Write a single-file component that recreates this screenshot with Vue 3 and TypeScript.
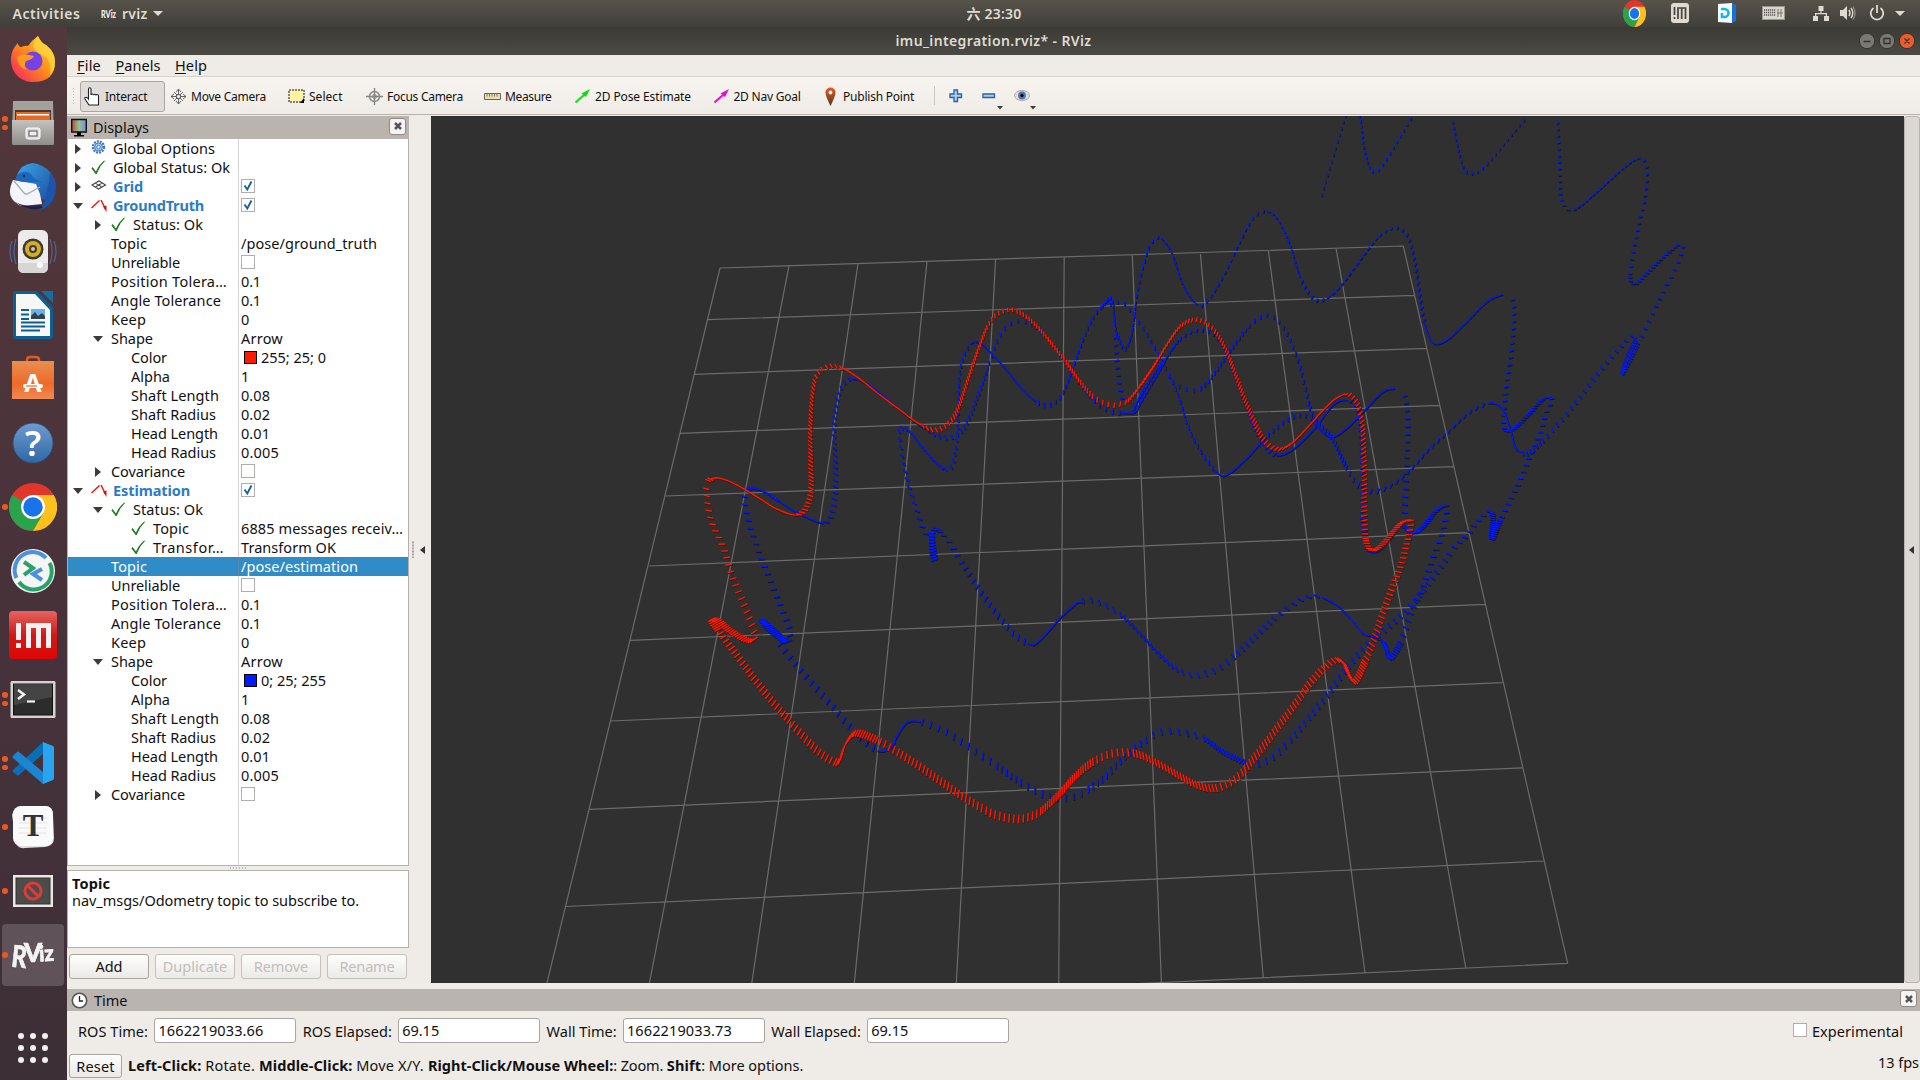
<script setup lang="ts">
import { h } from 'vue'

const FAMILY = '"Noto Sans", "Noto Sans CJK SC", sans-serif'
const pen = document.createElement('canvas').getContext('2d')!

interface TxProps { t: string; w: number; s?: number; b?: number; u?: boolean }

// Label with a fixed advance width: tracking is derived from the measured text.
const Tx = (p: TxProps) => {
  const size = p.s ?? 14.5
  const weight = p.b ?? 400
  pen.font = `${weight} ${size}px ${FAMILY}`
  const gap = (p.w - pen.measureText(p.t).width) / p.t.length
  const style = { fontSize: `${size}px`, fontWeight: weight, letterSpacing: `${gap.toFixed(3)}px`, width: `${p.w}px`, display: 'inline-block', whiteSpace: 'pre', flex: 'none' }
  return h('span', { style }, p.u ? [h('u', { style: { textUnderlineOffset: '2px' } }, p.t[0]), p.t.slice(1)] : p.t)
}
Tx.props = ['t', 'w', 's', 'b', 'u']

interface Row { d: number; t: string; w: number; arrow?: 'open' | 'shut'; icon?: string; b?: number; v?: string; vw?: number; check?: number; color?: string; sel?: boolean }

const shapeRows = (color: string, label: string): Row[] => [
  { d: 1, t: 'Unreliable', w: 69, check: 0 },
  { d: 1, t: 'Position Tolera…', w: 116, v: '0.1', vw: 20 },
  { d: 1, t: 'Angle Tolerance', w: 110, v: '0.1', vw: 20 },
  { d: 1, t: 'Keep', w: 35, v: '0', vw: 9 },
  { d: 1, t: 'Shape', w: 42, arrow: 'open', v: 'Arrow', vw: 42 },
  { d: 2, t: 'Color', w: 36, color, v: label, vw: 65 },
  { d: 2, t: 'Alpha', w: 39, v: '1', vw: 9 },
  { d: 2, t: 'Shaft Length', w: 88, v: '0.08', vw: 29 },
  { d: 2, t: 'Shaft Radius', w: 85, v: '0.02', vw: 29 },
  { d: 2, t: 'Head Length', w: 87, v: '0.01', vw: 29 },
  { d: 2, t: 'Head Radius', w: 85, v: '0.005', vw: 38 },
  { d: 1, t: 'Covariance', w: 74, arrow: 'shut', check: 0 },
]
const rows: Row[] = [
  { d: 0, t: 'Global Options', w: 102, arrow: 'shut', icon: 'gear' },
  { d: 0, t: 'Global Status: Ok', w: 117, arrow: 'shut', icon: 'ok' },
  { d: 0, t: 'Grid', w: 30, arrow: 'shut', icon: 'grid', b: 700, check: 1 },
  { d: 0, t: 'GroundTruth', w: 91, arrow: 'open', icon: 'odom', b: 700, check: 1 },
  { d: 1, t: 'Status: Ok', w: 70, arrow: 'shut', icon: 'ok' },
  { d: 1, t: 'Topic', w: 36, v: '/pose/ground_truth', vw: 136 },
  ...shapeRows('#ff1900', '255; 25; 0'),
  { d: 0, t: 'Estimation', w: 77, arrow: 'open', icon: 'odom', b: 700, check: 1 },
  { d: 1, t: 'Status: Ok', w: 70, arrow: 'open', icon: 'ok' },
  { d: 2, t: 'Topic', w: 36, icon: 'ok', v: '6885 messages receiv…', vw: 162 },
  { d: 2, t: 'Transfor…', w: 71, icon: 'ok', v: 'Transform OK', vw: 95 },
  { d: 1, t: 'Topic', w: 36, v: '/pose/estimation', vw: 117, sel: true },
  ...shapeRows('#0019ff', '0; 25; 255'),
]

const dock: { id: string; dots: number }[] = [
  { id: 'firefox', dots: 0 }, { id: 'files', dots: 2 }, { id: 'mail', dots: 0 }, { id: 'speaker', dots: 0 },
  { id: 'writer', dots: 0 }, { id: 'store', dots: 0 }, { id: 'help', dots: 0 }, { id: 'chrome', dots: 1 },
  { id: 'remote', dots: 0 }, { id: 'meet', dots: 0 }, { id: 'term', dots: 2 }, { id: 'code', dots: 2 },
  { id: 'typora', dots: 1 }, { id: 'blocked', dots: 1 }, { id: 'rviz', dots: 1 },
]

const fields = [
  { l: 'ROS Time:', lw: 70, v: '1662219033.66', vw: 105 },
  { l: 'ROS Elapsed:', lw: 89, v: '69.15', vw: 37 },
  { l: 'Wall Time:', lw: 70, v: '1662219033.73', vw: 105 },
  { l: 'Wall Elapsed:', lw: 89.5, v: '69.15', vw: 37 },
]

// ---- ground grid: ends of every line in window coordinates ----
const leftEnd = [[720, 268], [707.5, 319.7], [694, 374.3], [680, 433.3], [665, 496], [649, 566], [630.5, 640.4], [611, 721], [589.5, 809.4], [565.7, 906.5], [539, 1012]]
const rightEnd = [[1403.3, 246], [1415, 295.3], [1427, 348.3], [1440, 405.3], [1453.5, 466.7], [1469, 532.7], [1485, 604.3], [1502.7, 682.7], [1522, 767.8], [1544, 861], [1567.7, 963.3]]
const topX = [720, 789, 858, 927, 995.6, 1064.2, 1132.3, 1200.3, 1268.3, 1336, 1403.3]
const botEnd = [[547, 983], [649.4, 983], [751.8, 983], [854.3, 983], [956.3, 983], [1058.7, 983], [1161.4, 983], [1263.3, 978], [1365, 973], [1465.8, 968], [1567.7, 963.3]]
const gridPath = [
  ...leftEnd.map((p, i) => `M${p}L${rightEnd[i]}`),
  ...topX.map((x, i) => `M${x},${(268 - i * 2.2).toFixed(1)}L${botEnd[i]}`),
].join('')

// ---- odometry tracks: "x,y" way-points ----
// "@n" sets the arrow spacing; "~n" does too, for stretches driven along the heading
interface Track { c: [number, number]; k: number; p: string }
const truth: Track = {
  c: [1060, 540], k: 2.2,
  p: `@2.6 706,482 711,479 ~3.6 720,478.3 735,484 756.7,496.7 776.7,509 796.7,515 @3.6 806.7,506.7 811,490 810.7,463 810.3,430 811.7,400 815,380 @4.8 820,370.7 830,366 841.7,368 ~4 856.7,376.7 880,395 900,410 920,424.3 @4.6 936.7,430 951.7,420 @3.4 960,403.3 970,373.3 980,345 988.3,325 @4.6 996.7,314.7 1008.3,310 1020,312.7 @3.4 1035,324.3 1050,341.7 1065,360.7 1080,381.7 1095,398.3 @6 1110,405 1118,404.5 1126.7,401.7 @3.4 1138.3,388.3 1153.3,366.7 1166.7,345 1180,326.7 1193.3,320 @4.4 1205,322.3 1216.7,333.3 @3.4 1226.7,351.7 1235,373.3 1245,400 1255,423.3 1265,441.7 @4 1278.3,449 1291.7,443.3 ~3.5 1306.7,428.3 1323.3,410 1336.7,398 1348.3,394.3 @4.2 1356.7,402.3 1361.7,420 1363.3,440 1364.3,476.7 1364.3,516.7 1366,540 @2.6 1371.7,550.3 1381.7,545 1393.3,531.7 1401.7,522.7 1410.7,521 @4.6 1408.3,536.7 1401.7,563 1393.3,585 1383.3,611.7 1375,636.7 1365,661.7 @2.5 1355,681.7 1348.3,673.3 1344,663.3 1336.7,660 @4 1326.7,665.7 1310,683.3 1293.3,706.7 1273.3,733.3 1256.7,755 1240,775 @5 1226.7,784.3 1213.3,788.3 @3.3 1196.7,785 1176.7,774.3 1153.3,761 1133.3,753.3 @5.2 1113.3,753.3 1093.3,761.7 @2.8 1076.7,775 1056.7,796.7 1040,811.7 @4.6 1029,817 1015,819 993,814 966.7,799 @4.2 943,783 920,766.7 896.7,751.7 @5 876.7,740 @2.4 856.7,733 848,740 843,750 840,760 835,762 @4.4 820,753 793,725 763,690 736.7,655 716.7,628 @2.2 711,620 718,620.7 730,630.7 746.7,640 755,638 @7 751,623 745,606.7 733,578 723,546.7 713,525 708,506.7 706,484`,
}
const estimate: Track[] = [
  { c: [1060, 540], k: 2.2, p: `@2.6 745,491.7 751.7,488 763,491 780,501.7 ~4.5 800,514 823,522.7 @6 831.7,513 835,493 835,460 834,430 836,405 841.7,386.7 850,379 ~4.8 863,381.7 880,393 900,410 926.7,430 @6 943,437 958,434 @5 968,420 980,390 990,360 @7.5 1000,335 1013,322 1027,322 @6 1041.7,331.7 1063,358 1080,383 1097,403 @7 1113,412 1123,412.7 ~3.2 1135,411.7 1141.7,400 @4.2 1156.7,375 1170,351.7 1183,336.7 @6 1198,330 1213,333 1225,350 1236.7,380 1251.7,420 @5 1265,445 1276.7,455 ~4.2 1293,449 1313,430 1333,405 1346.7,400 @6 1356.7,406.7 1360.7,433 1362.7,476.7 1363,520 @3 1368,548 1376.7,550.7 1390,536.7 1400,525 @2.6 1413,532.7 1423,526.7 1436.7,510 1446.7,506 @7.5 1445,520 1440,540 1433,556.7 1426.7,575 1421.7,590 1413,606.7 1408,620 1400,643 @2.4 1390,658 1386.7,650 1383,641.7 1375,637 ~4.2 1363,633 1350,618 1336.7,605 @5 1320,596.7 @8 1306.7,597 1290,606 1270,621.7 @6 1253,638 1233,656.7 @8 1216.7,669 1196.7,675 1176.7,669 @5.4 1156.7,651.7 1136.7,630 1116.7,611.7 @8 1093,600 1080,602 ~4.2 1076.7,603 1060,618 1040,640 1030,644 @7 1013,633 990,605 973,580 960,560 @8 950,543 940,531.7 @2.8 935,528 931.7,536.7 935,560 932,552 931,532 @8 925,533 916.7,510 908,483 903,460 899,434 901.7,428 @4.2 910,431.7 923,448 936.7,463 946.7,469 @6.5 953,461.7 957,436.7 958,413 959,380 963.3,356.7 971.7,343 ~4.6 981.7,344 993,355 1006.7,370 1023,390 1036.7,401.7 @6 1048,405 1061.7,395 1073,366.7 1080,346.7 1091.7,320 1101.7,306.7 @2.6 1111.7,299 @4.4 1115,326.7 1120,341.7 @5 1125,349 1131.7,333 1136,300 @7 1141.7,271.7 1150,245 1160,237.7 ~5 1171.7,253 1183,285 1196.7,304 @6.5 1206.7,301.7 1223,276.7 1240,241.7 1253,218 1266.7,211 ~5 1278,220 1290,245 1300,276.7 @6 1311.7,296.7 1323,300 ~6 1340,286.7 1360,260 1380,235 @6 1396.7,228 1408,236.7 1415,263 1420,296.7 1425,325 ~4.6 1433,342.7 1446.7,340 1466.7,321.7 1486.7,301.7 1503,294` },
  { c: [1150, 440], k: 1, p: `@7 1508,295 1513,300 1514,320 1511,355 1506.7,383 1504,410 1504,428 @3 1511.7,430 1528,415 1543,399 1551.7,399 @7 1546,413 1541,430 1535,445 1528,460 1520,480 1510,500 1500,520 @2 1491.7,539 1492.7,515 1488,512 @7 1476.7,521.7 1466.7,535 1453,548` },
  { c: [1100, 420], k: 1.6, p: `@7 1453,548 1436.7,571.7 1423,590 1406.7,610 1386.7,628 1366.7,645 1353,660 1340,676.7 1326.7,695 1306.7,720 1290,740 @8 1273,756.7 1256.7,764` },
  { c: [1060, 540], k: 2.2, p: `@3.2 1248,764 1223,751.7 1203,738 @8.5 1180,731.7 1160,731.7 1143,741.7 @6.5 1123,758 1106.7,775 @5.5 1086.7,790 @8 1068,797.7 1050,796.7 1040,793 1020,781.7 @5.6 993,763 @8.5 966.7,745 943,730 920,721.7 ~3.4 906.7,723 896.7,736.7 891.7,746.7 880,751 @8 866.7,742.7 850,726.7 826.7,700 803,673 786.7,653 776.7,640` },
  { c: [900, 560], k: 0.6, p: `@2.2 791,640 784,641 776.7,633 764,622 762,620 770,630 785,640 @8 790,633 785,616.7 775,593 766.7,571.7 763,563 758,550 750,526.7 745,506.7 744,493` },
  { c: [1200, 560], k: 2.6, p: `@7.5 1103,306.7 1120,301.7 1128,308 1143,328 1153,345 1163,363 1173,381.7 1190,390 1203,386.7 @5 1216.7,370 1233,346.7 1250,325 @7 1263,316 1273,316.7 1285,330 1296.7,356.7 1305,386.7 1310,408 @5 1318,426.7 ~4.6 1331.7,436.7 1346.7,428 1366.7,408 1383,391.7 1396.7,388` },
  { c: [1160, 450], k: 1, p: `@7.5 1400,390 1405,396.7 1407.7,420 1407,453 1405.7,483 1404,516.7` },
  { c: [1260, 640], k: 2, p: `@6.5 1166.7,370 1178,395 1188,426.7 1200,450 1216.7,472 ~4.6 1228,474 1246.7,458 1266.7,436.7 @6 1286.7,420 1303,415 1316.7,421.7 @4 1333,440 1346.7,468 @7 1360,486.7 1376.7,491 1396.7,481.7 1413,466.7 1430,448 1450,430 1470,411.7 1490,403 ~3.2 1501.7,408 1508,422 1512,436 1515,446.7 1520,451.7` },
  { c: [1040, 380], k: 1, p: `@7.5 1115,330 1116.7,360 1119,383 1123,401.7` },
  { c: [1060, 540], k: 2.6, p: `@4 1131.7,415 1138,400 1150,380 1158,368 1164,362` },
  { c: [1380, 320], k: 3, p: `@6.5 1319.6,201.7 1331,163 1345,116.7 1352,90 1360,117 @5 1363.7,146.7 1370,168 1376.7,171.7 @6.5 1386,160 1398,140 1412,117` },
  { c: [1460, 320], k: 3, p: `@5.4 1452,117 1457.6,146.7 1464.5,170 @6 1474,173 1486,165 1504.5,143 1527,117` },
  { c: [1400, 200], k: 1, p: `@6 1557.6,117 1559.6,166.7 1561.6,200 1570.6,211.7` },
  { c: [1500, 250], k: 1, p: `~4.6 1570.6,211.7 1584,203 1606.5,183 1627,165 1641,158 @7 1647,170 1645,196.7 1639,223 1633,253 1630,276.7 @3.6 1635,284 1647,273 1663.7,256.7 1678,245 @8 1683,246 1676,266.7 1663.7,290 1656.7,305 1645,328 1636.7,345 @2.6 1631,357 1621.7,374 1628,355 1635,340 1631,335.7` },
  { c: [1460, 240], k: 1, p: `@7 1631,335.7 1621.7,345 1603,366.7 1583,392.7 1563,418 1543,440 @4 1528,453 1520,451.7` },
]

function ticks(track: Track, boost: number): string {
  const pts: [number, number, number, boolean][] = []
  let gap = 5
  let along = false
  for (const tok of track.p.trim().split(/\s+/)) {
    if (tok[0] === '@' || tok[0] === '~') {
      gap = +tok.slice(1)
      along = tok[0] === '~'
    } else {
      const [x, y] = tok.split(',').map(Number)
      pts.push([x, y, gap, along])
    }
  }
  let out = ''
  let acc = 0
  let lx = pts[0][0]
  let ly = pts[0][1]
  for (let i = 0; i < pts.length - 1; i++) {
    const a = pts[Math.max(0, i - 1)]
    const b = pts[i]
    const c = pts[i + 1]
    const d = pts[Math.min(pts.length - 1, i + 2)]
    for (let n = 1; n <= 60; n++) {
      const t = n / 60
      const f = (j: 0 | 1) => 0.5 * (2 * b[j] + (c[j] - a[j]) * t + (2 * a[j] - 5 * b[j] + 4 * c[j] - d[j]) * t * t + (3 * b[j] - a[j] - 3 * c[j] + d[j]) * t * t * t)
      const x = f(0)
      const y = f(1)
      const sx = x - lx
      const sy = y - ly
      acc += Math.hypot(sx, sy)
      lx = x
      ly = y
      if (acc < c[2]) continue
      acc = 0
      const nx = c[3] ? sx : x - track.c[0]
      const ny = c[3] ? sy : (y - track.c[1]) * track.k
      const m = Math.hypot(nx, ny) || 1
      const len = (1.3 + ((y - 100) / 720) * 2.3) * boost
      const ux = (nx / m) * len
      const uy = (ny / m) * len
      out += `M${(x - ux).toFixed(1)} ${(y - uy).toFixed(1)}L${(x + ux).toFixed(1)} ${(y + uy).toFixed(1)}`
    }
  }
  return out
}
const bluePath = estimate.map((t) => ticks(t, 1.08)).join('')
const redPath = ticks(truth, 1.2)
</script>

<template>
  <div class="screen">
    <header class="topbar">
      <Tx class="act" t="Activities" :w="68" :s="14" :b="600" />
      <svg class="rvmini" width="18" height="20"><text x="1" y="14" font-size="10.500" font-weight="900" textLength="15" lengthAdjust="spacingAndGlyphs" fill="#eee" class="logo">RViz</text></svg>
      <Tx class="app" t="rviz" :w="25.5" :s="14" :b="600" />
      <i class="tri"></i>
      <div class="clock"><Tx t="六 23:30" :w="55" :s="14" :b="600" /></div>
      <div class="tray">
        <svg width="23" height="27" viewBox="0 0 48 48" preserveAspectRatio="none"><use href="#chrome-logo" /></svg>
        <svg width="18" height="20" viewBox="0 0 18 20"><rect width="18" height="20" rx="3" fill="#dfdbd2" /><path d="M3.5 4v8M3.5 14v2M7 16V5h7.500v11M10.700 5v11" stroke="#45433e" stroke-width="1.700" fill="none" /></svg>
        <svg width="20" height="20" viewBox="0 0 20 20"><path d="M1 1l14-1v20L1 19z" fill="#f7fbff" /><path d="M15 0l4 2v16l-4 2z" fill="#1573d8" /><path d="M4 6h3.500a4 4 0 0 1 0 8H5v-4" fill="none" stroke="#16b7e8" stroke-width="2.600" /></svg>
        <svg width="23" height="14" viewBox="0 0 23 14"><rect x=".5" y=".5" width="22" height="13" fill="#d9d6ce" stroke="#9a978f" /><path d="M2 4h12M2 6.500h12M2 9h12" stroke="#55534d" stroke-width="1.500" stroke-dasharray="1.200 .8" /><path d="M16 3v8M19 3v8M15 7h6" stroke="#77756e" /></svg>
        <svg width="16" height="16" viewBox="0 0 16 16"><path d="M5.500 1h5v5h-5zM0 11h5v5H0zM11 11h5v5h-5zM2 8h12v1.200H2zM7.400 6h1.200v3H7.400zM2 8h1.200v3H2zM12.800 8H14v3h-1.200z" fill="#dfdbd2" /></svg>
        <svg width="17" height="16" viewBox="0 0 17 16"><path d="M0 5h3l4-4v14l-4-4H0z" fill="#dfdbd2" /><path d="M9 5q2 3 0 6M11 3q3.500 5 0 10" fill="none" stroke="#dfdbd2" stroke-width="1.400" /><path d="M13 1.500q4 6.500 0 13" fill="none" stroke="#8b8881" stroke-width="1.400" /></svg>
        <svg width="16" height="16" viewBox="0 0 16 16"><path d="M4.500 3A6.300 6.300 0 1 0 11.500 3M8 0v8" fill="none" stroke="#dfdbd2" stroke-width="1.800" /></svg>
        <i class="tri"></i>
      </div>
    </header>

    <div class="below">
      <nav class="dock">
        <div v-for="k in dock" :key="k.id" class="cell" :class="{ on: k.id === 'rviz' }">
          <span class="dots"><i v-for="n in k.dots" :key="n"></i></span>
          <svg width="48" height="48" viewBox="0 0 48 48">
            <template v-if="k.id === 'firefox'">
              <path d="M24 47C11 47 2 37 2 25 2 17 5 12 9 8q0 3 3 4 5-2 7-1Q23 5 29 1q3 7 8 9 9 7 9 17 0 20-22 20z" fill="url(#ffx)" />
              <path d="M29 1q3 7 8 9 9 7 9 17 0 8-5 13Q43 28 37 22 28 18 24 12 25 5 29 1z" fill="#ffd43c" opacity=".8" />
              <circle cx="24" cy="26" r="9.500" fill="#7542e5" /><path d="M8 22q5-4 12-2l5 1q-2 4-8 5-3 5 1 9-9-2-10-13z" fill="#ff9a1f" />
            </template>
            <template v-else-if="k.id === 'files'">
              <path d="M4 2h40l1 42q0 2-2 2H5q-2 0-2-2z" fill="#a3a19d" /><path d="M6 11h36v12H6z" fill="#4b3a32" /><path d="M7 13h34v9H7z" fill="#e8681f" /><path d="M8 15h32v1.500H8z" fill="#fff" />
              <path d="M3 21h42v23q0 2-2 2H5q-2 0-2-2z" fill="url(#metal)" /><rect x="17" y="29" width="14" height="11" rx="2" fill="#ddd" stroke="#fff" /><rect x="20" y="32" width="8" height="5" fill="#eee" stroke="#555" />
            </template>
            <template v-else-if="k.id === 'mail'">
              <path d="M8 12Q12 1 24 0q11 2 17 9 8 9 5 22-3 13-16 16 5-5 6-10L8 28z" fill="url(#tb)" />
              <path d="M41 9q7 9 5 22-3 13-16 16 8-8 8-20 3-9 3-18z" fill="#1c55ad" />
              <path d="M4 17Q-3 32 6 39q3 3 7 4l20-2-2-10-4-10-11-2z" fill="#f3f5f9" />
              <path d="M5 18l10 12q1.500 1.500 3.500.8L31 24" fill="none" stroke="#a4adbd" stroke-width="1.300" />
              <path d="M8 12q8-6 14-1 3 6 13 9l-11-1Q14 20 6 17z" fill="#1f66bd" /><circle cx="15" cy="13" r="1.200" fill="#0c2347" />
              <path d="M6 39q12 6 25 3l3 3q-14 4-28-6z" fill="#232047" />
            </template>
            <template v-else-if="k.id === 'speaker'">
              <path d="M3 14q-4 10 0 21M7 12q-4 12 0 25M45 14q4 10 0 21M41 12q4 12 0 25" fill="none" stroke="#536491" stroke-width="1.200" /><rect x="9" y="3" width="30" height="43" rx="6" fill="#ecebea" /><path d="M9 36h30v4q0 6-6 6H15q-6 0-6-6z" fill="#d8d6d4" /><circle cx="24" cy="22" r="10.500" fill="#3b3935" /><circle cx="24" cy="22" r="8" fill="#d8ad1d" /><circle cx="24" cy="22" r="4" fill="#3c3a35" /><circle cx="24" cy="22" r="2" fill="#c9c5bc" /><circle cx="31" cy="38" r="3" fill="#fafafa" />
            </template>
            <template v-else-if="k.id === 'writer'">
              <path d="M6 0h22l16 16v29q0 3-3 3H7q-3 0-3-3V2q0-2 2-2z" fill="#0b5f92" /><path d="M7 3h19l15 16v26H7z" fill="#f7f7f5" /><path d="M32 0h12v12z" fill="#176ea6" /><path d="M12 19h8M12 23.500h8M12 28h8M12 31.500h24M12 35.500h24M12 39.500h19" stroke="#0b5f92" stroke-width="2" /><path d="M22 18h14v10H22z" fill="#67b4e8" /><path d="M22 28v-3l4-4 3 4 4-3 3 3v3z" fill="#33424b" />
            </template>
            <template v-else-if="k.id === 'store'">
              <path d="M18 10V5q0-3 3-3h6q3 0 3 3v5" fill="none" stroke="#e55a21" stroke-width="2.500" /><path d="M3 6h42v38H3z" fill="url(#bag)" /><text x="24" y="37" font-size="25" font-weight="700" text-anchor="middle" fill="#fff">A</text><path d="M16 31h16" stroke="#fff" stroke-width="4" stroke-linecap="round" /><path d="M17 31h11" stroke="#ed6b2c" stroke-width="1.200" />
            </template>
            <template v-else-if="k.id === 'help'">
              <circle cx="24" cy="24" r="20" fill="url(#hlp)" stroke="#2c4f78" stroke-width=".8" /><text x="24" y="36.500" font-size="35" font-weight="600" text-anchor="middle" fill="#fff">?</text>
            </template>
            <g v-else-if="k.id === 'chrome'" id="chrome-logo">
              <circle cx="24" cy="24" r="24" fill="#e0362c" /><path d="M24 24L3.200 12A24 24 0 0 0 24 48l10.400-18z" fill="#2ba24c" /><path d="M24 12h20.800A24 24 0 0 1 24 48l10.400-18z" fill="#fcc21b" /><circle cx="24" cy="24" r="12" fill="#fff" /><circle cx="24" cy="24" r="9.700" fill="#1a73e8" />
            </g>
            <template v-else-if="k.id === 'remote'">
              <circle cx="24" cy="24" r="22" fill="#f5f5f3" /><path d="M7.500 31A18 18 0 0 1 37 11" fill="none" stroke="#4b91e0" stroke-width="4" /><path d="M40.500 16A18 18 0 0 1 10 35" fill="none" stroke="#28a26b" stroke-width="4" /><path d="M15 15l9 6-9 7" fill="none" stroke="#28a26b" stroke-width="4" /><path d="M33 22l-9 5 9 6" fill="none" stroke="#4b91e0" stroke-width="4" />
            </template>
            <template v-else-if="k.id === 'meet'">
              <rect width="48" height="48" rx="4" fill="url(#red)" /><path d="M7 12h5v17H7zM7 32h5v5H7zM17 12h25v25h-5V17h-5v20h-5V17h-5v20h-5z" fill="#f2f0f0" />
            </template>
            <template v-else-if="k.id === 'term'">
              <rect x="1.500" y="6" width="45" height="37" rx="1.500" fill="#d5d3d0" /><rect x="4.500" y="9" width="39" height="31" fill="#2c2c2c" stroke="#111" /><path d="M5 9h38v13L5 30z" fill="#555" opacity=".6" /><path d="M9 15l6 4.500-6 4.500" fill="none" stroke="#f3f3f3" stroke-width="2.500" /><path d="M18 26.500h8" stroke="#f3f3f3" stroke-width="2.200" />
            </template>
            <template v-else-if="k.id === 'code'">
              <path d="M34 3v12L10 36q-1 1-2 0l-4-3q-1-1 0-2z" fill="#0a6fb5" /><path d="M4 17l4-4q1-1 2 0l24 20v12L4 19q-1-1 0-2z" fill="#1b86cf" /><path d="M34 3l10 4q1 .5 1 2v30q0 1.500-1 2l-10 4z" fill="#27a5f0" />
            </template>
            <template v-else-if="k.id === 'typora'">
              <path d="M3 12q2-8 10-9l23 0q8 0 8 9l1 23q0 8-9 9l-20 1q-8 1-9-6z" fill="#dedede" /><rect x="4" y="3" width="40" height="40" rx="8" fill="#fafafa" /><path d="M10 15h28M10 20h28M10 25h28M10 30h28" stroke="#e4e4e4" /><text x="24" y="33" font-size="31" font-weight="700" text-anchor="middle" fill="#333" class="serif">T</text>
            </template>
            <template v-else-if="k.id === 'blocked'">
              <rect x="4" y="8" width="40" height="32" fill="#e9e8e6" /><rect x="7" y="11" width="34" height="26" fill="#4c4c4b" stroke="#333" /><circle cx="24" cy="24" r="8" fill="none" stroke="#dc3c38" stroke-width="3" /><path d="M18 18l12 12" stroke="#dc3c38" stroke-width="3" />
            </template>
            <template v-else>
              <g fill="#f4f3f3" stroke="#f4f3f3" stroke-width=".7" font-weight="900" class="logo mark"><text x="3" y="36" font-size="30" textLength="15" lengthAdjust="spacingAndGlyphs" transform="rotate(6 8 24)">R</text><text x="15" y="31" font-size="27" textLength="18" lengthAdjust="spacingAndGlyphs">V</text><text x="30" y="30" font-size="22" textLength="15" lengthAdjust="spacingAndGlyphs" transform="rotate(-4 38 24)">iz</text></g>
            </template>
          </svg>
        </div>
        <div class="apps"><i v-for="n in 9" :key="n"></i></div>
      </nav>

      <main class="win">
        <div class="title">
          <span class="tside"></span>
          <Tx t="imu_integration.rviz* - RViz" :w="196" :s="14" :b="600" />
          <span class="tside wb">
            <svg width="56" height="20" viewBox="0 0 56 20"><g stroke="#33322e"><circle cx="8" cy="10" r="7.700" fill="#7b7973" /><circle cx="28" cy="10" r="7.700" fill="#7b7973" /><circle cx="48" cy="10" r="7.700" fill="#ec5b2b" /></g><path d="M4.500 10.500h7M25 7.500h6v5h-6zM45.500 7.500l5 5M50.500 7.500l-5 5" fill="none" stroke="#33322e" stroke-width="1.300" /></svg>
          </span>
        </div>
        <div class="menu"><Tx t="File" :w="24" :u="true" /><Tx t="Panels" :w="45" :u="true" /><Tx t="Help" :w="32" :u="true" /></div>
        <div class="tools">
          <i class="grip"></i>
          <div class="tool on"><svg width="17" height="19" viewBox="0 0 17 19"><path d="M4.500 11V2q0-1.300 1.200-1.300T7 2v6q0-1 1.200-1t1.300 1.200q0-1 1.200-1t1.300 1.200q0-1 1.200-.9 1.300 0 1.300 1.400V18H5L1 12q-.6-1.600.8-1.800Q3 10 4.500 12z" fill="#fff" stroke="#222" stroke-width="1.100" /></svg><Tx t="Interact" :w="42.5" :s="12" /></div>
          <div class="tool t2"><svg width="17" height="17" viewBox="0 0 17 17"><path d="M8.500 1v15M1 8.500h15M6 4l2.500-3L11 4M6 13l2.500 3 2.500-3M4 6L1 8.500 4 11M13 6l3 2.500-3 2.500M4 4l9 9M13 4l-9 9" fill="none" stroke="#666" /><circle cx="8.500" cy="8.500" r="2.200" fill="#eee" stroke="#444" /></svg><Tx t="Move Camera" :w="75" :s="12" /></div>
          <div class="tool t3"><svg width="17" height="17" viewBox="0 0 17 17"><path d="M1 2h15v12H1z" fill="#fff3a5" stroke="#111" stroke-dasharray="2 1" /><path d="M16 10v5h-4z" /></svg><Tx t="Select" :w="33.5" :s="12" /></div>
          <div class="tool t4"><svg width="17" height="17" viewBox="0 0 17 17"><g fill="none" stroke="#858585"><circle cx="8.500" cy="8.500" r="5" stroke-width="1.400" /><circle cx="8.500" cy="8.500" r="2" /><path d="M8.500 0v17M0 8.500h17" stroke-width="1.400" /></g></svg><Tx t="Focus Camera" :w="76" :s="12" /></div>
          <div class="tool t5"><svg width="17" height="17" viewBox="0 0 17 17"><path d="M.5 5.500h16v6H.5z" fill="#eadfae" stroke="#6b6657" /><path d="M3 6v2.500M5.500 6v2.500M8 6v2.500M10.500 6v2.500M13 6v2.500" stroke="#777" /></svg><Tx t="Measure" :w="46.500" :s="12" /></div>
          <div class="tool t6"><svg width="17" height="17" viewBox="0 0 17 17"><path d="M1.500 14.500L10 7" stroke="#12e412" stroke-width="2.200" /><path d="M16 1l-4 8-4.500-3.500z" fill="#0ddb0d" /></svg><Tx t="2D Pose Estimate" :w="96" :s="12" /></div>
          <div class="tool t7"><svg width="17" height="17" viewBox="0 0 17 17"><path d="M1.500 14.500L10 7" stroke="#f00fd8" stroke-width="2.200" /><path d="M16 1l-4 8-4.500-3.500z" fill="#e70cc9" /></svg><Tx t="2D Nav Goal" :w="67" :s="12" /></div>
          <div class="tool t8"><svg width="17" height="19" viewBox="0 0 17 19"><path d="M8.500 19Q3.500 9 3.500 5.500a5 5 0 0 1 10 0Q13.500 9 8.500 19z" fill="url(#pin)" /><circle cx="8.500" cy="5.500" r="1.900" fill="#fff" /></svg><Tx t="Publish Point" :w="71" :s="12" /></div>
          <i class="sep"></i>
          <svg width="130" height="34" viewBox="0 0 130 34"><path d="M17 11h3.500v4h4v3.500h-4v4H17v-4h-4V15h4z" fill="#a9cdf0" stroke="#2f5f9e" stroke-width="1.300" /><path d="M46 15h11.500v3.500H46z" fill="#a9cdf0" stroke="#2f5f9e" stroke-width="1.300" /><path d="M60 27h6l-3 3.500zM93 27h6l-3 3.500z" fill="#3c3b37" /><ellipse cx="85" cy="16.500" rx="7.500" ry="5" fill="#deded8" stroke="#aaa" /><circle cx="85" cy="16.500" r="3.900" fill="#5a6fb8" /><circle cx="85" cy="16.500" r="1.700" fill="#111" /></svg>
        </div>

        <div class="mid">
          <section class="left">
            <div class="ptitle">
              <svg width="16" height="20" viewBox="0 0 16 20"><path d="M.7 1.500h14.600V14H.7z" fill="url(#mon)" stroke="#111" stroke-width="1.400" /><path d="M6 14h4v3h3v1.500H3V17h3z" /></svg>
              <Tx t="Displays" :w="56" /><span class="x"><svg width="8" height="8" viewBox="0 0 8 8"><path d="M1 1l6 6M7 1L1 7" stroke="#555" stroke-width="2.500" /></svg></span>
            </div>
            <div class="tree">
              <div v-for="(r, i) in rows" :key="i" class="row" :class="{ sel: r.sel }">
                <div class="name" :style="{ paddingLeft: r.d * 20 + 'px' }">
                  <span class="arw"><i v-if="r.arrow" :class="r.arrow"></i></span>
                  <span v-if="r.icon" class="ic">
                    <svg width="16" height="16" viewBox="0 0 16 16">
                      <path v-if="r.icon === 'ok'" d="M1.500 8.500l3.500 4.800Q8 6 13.500 1.800 8.500 6.500 5.200 15L1 9.500z" fill="#177a17" stroke="#177a17" stroke-width=".9" />
                      <g v-else-if="r.icon === 'gear'" fill="none"><circle cx="7.500" cy="7" r="5.600" stroke="#3f78bd" stroke-width="2.200" stroke-dasharray="2 1" /><circle cx="7.500" cy="7" r="4" fill="#a9c9ec" stroke="#3f78bd" /><circle cx="7.500" cy="7" r="1.700" fill="#fff" stroke="#3f78bd" /></g>
                      <path v-else-if="r.icon === 'grid'" d="M1 7l7-4 6.500 4-7 4zM4.300 5.100l6.700 4M11.300 5L4.500 9" fill="none" stroke="#444" stroke-width="1.100" />
                      <path v-else d="M.5 11L8.500 3.500M10 3l4.500 9" fill="none" stroke="#f0190a" stroke-width="1.500" />
                      <path v-if="r.icon === 'odom'" d="M12 9.500l3.500-1v6.500z" fill="#d0140a" />
                    </svg>
                  </span>
                  <Tx :t="r.t" :w="r.w" :b="r.b" :class="{ disp: r.b }" />
                </div>
                <div class="val">
                  <i v-if="r.check !== undefined" class="cb"><svg v-if="r.check" width="12" height="12" viewBox="0 0 12 12"><path d="M2.500 5.500l2.800 4L9.500 1.500" fill="none" stroke="#1c5f9e" stroke-width="1.900" /></svg></i>
                  <i v-if="r.color" class="sw" :style="{ background: r.color }"></i>
                  <Tx v-if="r.v" :t="r.v" :w="r.vw!" />
                </div>
              </div>
              <i class="rest"></i>
            </div>
            <i class="hgrip"></i>
            <div class="desc"><Tx t="Topic" :w="38" :b="700" /><Tx t="nav_msgs/Odometry topic to subscribe to." :w="287" /></div>
            <div class="btns">
              <span class="btn"><Tx t="Add" :w="27" /></span><span class="btn off"><Tx t="Duplicate" :w="64.500" /></span><span class="btn off"><Tx t="Remove" :w="54.500" /></span><span class="btn off"><Tx t="Rename" :w="55" /></span>
            </div>
          </section>
          <div class="split"><i class="vgrip"></i><i class="al"></i></div>
          <svg class="view" width="1473" height="867" viewBox="431 116 1473 867">
            <rect x="431" y="116" width="1473" height="867" fill="#303030" />
            <path :d="gridPath" stroke="#6b6b6b" stroke-width="1.200" fill="none" />
            <path :d="bluePath" stroke="#12122c" stroke-width="1.600" transform="translate(.5 .8)" />
            <path :d="bluePath" stroke="#0219fb" stroke-width="1.350" />
            <path :d="redPath" stroke="#3c0f0a" stroke-width="1.700" transform="translate(.5 .7)" />
            <path :d="redPath" stroke="#fb1a02" stroke-width="1.450" />
          </svg>
          <div class="rbar"><i class="al"></i></div>
        </div>

        <div class="bsplit"><i class="hgrip"></i></div>
        <div class="ptitle time">
          <svg width="17" height="17" viewBox="0 0 17 17"><circle cx="8.500" cy="8.500" r="7.200" fill="#fff" stroke="#555" stroke-width="1.600" /><path d="M8.500 4v5H12" fill="none" stroke="#222" stroke-width="1.300" /></svg>
          <Tx t="Time" :w="33.500" /><span class="x"><svg width="8" height="8" viewBox="0 0 8 8"><path d="M1 1l6 6M7 1L1 7" stroke="#555" stroke-width="2.500" /></svg></span>
        </div>
        <div class="fields">
          <template v-for="f in fields" :key="f.l"><Tx :t="f.l" :w="f.lw" /><span class="inp"><Tx :t="f.v" :w="f.vw" /></span></template>
          <i class="cb exp"></i><Tx t="Experimental" :w="91" />
        </div>
        <div class="status">
          <span class="btn reset"><Tx t="Reset" :w="38.500" /></span>
          <Tx t="Left-Click: " :w="77.300" :b="700" /><Tx t="Rotate. " :w="53.700" /><Tx t="Middle-Click: " :w="97.300" :b="700" /><Tx t="Move X/Y. " :w="71.600" /><Tx t="Right-Click/Mouse Wheel:" :w="185.400" :b="700" /><Tx t=": Zoom. " :w="53.600" /><Tx t="Shift" :w="34.400" :b="700" /><Tx t=": More options." :w="102" />
          <span class="fps"><Tx t="13 fps" :w="41" /></span>
        </div>
      </main>
    </div>
    <svg width="0" height="0" class="defs">
      <linearGradient id="ffx" x1="1" y1="0" x2="0" y2="1"><stop offset="0" stop-color="#ffe03a" /><stop offset=".5" stop-color="#ff8a1c" /><stop offset="1" stop-color="#f5156c" /></linearGradient>
      <linearGradient id="metal" x2="0" y2="1"><stop offset="0" stop-color="#c4c2be" /><stop offset="1" stop-color="#8f8d89" /></linearGradient>
      <linearGradient id="tb" x2="1" y2="1"><stop offset="0" stop-color="#37a7e6" /><stop offset="1" stop-color="#1b3f93" /></linearGradient>
      <linearGradient id="bag" x2="0" y2="1"><stop offset="0" stop-color="#e88f50" /><stop offset=".6" stop-color="#ee6a2b" /><stop offset="1" stop-color="#f08a52" /></linearGradient>
      <linearGradient id="hlp" x2="0" y2="1"><stop offset="0" stop-color="#6f9bd0" /><stop offset="1" stop-color="#2d68a5" /></linearGradient>
      <linearGradient id="red" x2="0" y2="1"><stop offset="0" stop-color="#e5645f" /><stop offset=".5" stop-color="#cf1a18" /><stop offset="1" stop-color="#e00505" /></linearGradient>
      <linearGradient id="pin" x2="0" y2="1"><stop offset="0" stop-color="#ee5527" /><stop offset="1" stop-color="#4b3a20" /></linearGradient>
      <linearGradient id="mon"><stop offset="0" stop-color="#b94848" /><stop offset=".5" stop-color="#8fc68f" /><stop offset="1" stop-color="#8484e0" /></linearGradient>
    </svg>
  </div>
</template>

<style>
body { margin: 0; overflow: hidden; }
</style>
<style scoped>
.screen { width: 1920px; height: 1080px; display: flex; flex-direction: column; overflow: hidden; position: relative; font: 14.5px/19px "Noto Sans", "Noto Sans CJK SC", sans-serif; color: #111; background: #efebe7; }
.screen * { box-sizing: border-box; }
.defs { position: absolute; }
svg { display: block; flex: none; }
.topbar { height: 27px; flex: none; display: flex; align-items: center; background: linear-gradient(#57534a, #403f3a); color: #dfdbd2; padding-left: 12.5px; }
.rvmini { margin: 0 4px 0 19.5px; overflow: visible; }
.tri { width: 0; border: 5px solid transparent; border-top: 5px solid #dfdbd2; border-bottom: 0; margin-left: 5px; }
.clock { flex: 1; padding-left: 804px; }
.tray { display: flex; align-items: center; width: 297px; margin-top: -1px; }
.tray svg:nth-child(2) { margin-left: 24.5px; }
.tray svg:nth-child(3) { margin-left: 28px; }
.tray svg:nth-child(4) { margin-left: 25px; }
.tray svg:nth-child(5) { margin-left: 28px; }
.tray svg:nth-child(6) { margin-left: 11px; }
.tray svg:nth-child(7) { margin-left: 12px; }
.tray .tri { margin-left: 10px; }
.below { flex: 1; display: flex; min-height: 0; }
.dock { width: 67px; flex: none; background: linear-gradient(#52383b, #4a333a 45%, #43313a 75%, #3d2f36); display: flex; flex-direction: column; }
.cell { height: 64px; flex: none; display: flex; align-items: center; border-radius: 4px; }
.cell:first-child { height: 63px; margin-bottom: 1px; }
.cell.on { background: rgba(255, 255, 255, 0.17); width: 62px; height: 62px; margin: 1px 0 0 2px; }
.dots { width: 9px; display: flex; flex-direction: column; gap: 3px; padding-left: 2px; }
.cell.on .dots { width: 7px; padding-left: 0; }
.dots i { width: 5.5px; height: 5.5px; border-radius: 50%; background: #ed5622; }
.serif { font-family: "Liberation Serif", serif; }
.logo { font-family: "Lato", sans-serif; }
.mark { filter: drop-shadow(0.5px 1px 0.5px #55494c); }
.apps { display: grid; grid-template-columns: repeat(3, 6px); gap: 6px; margin: 47px 0 0 18px; }
.apps i { width: 6px; height: 6px; border-radius: 50%; background: #f2f1f0; }
.win { flex: 1; display: flex; flex-direction: column; min-width: 0; }
.title { height: 28px; flex: none; display: flex; align-items: center; background: linear-gradient(#3b3a35, #4b4a44); color: #dfdbd2; padding-bottom: 1px; }
.tside { flex: 1; display: flex; justify-content: flex-end; padding-right: 5px; }
.menu { height: 22px; flex: none; display: flex; padding: 1px 0 0 10px; gap: 14.5px; border-bottom: 1px solid #d5d1cb; }
.tools { height: 38px; flex: none; display: flex; align-items: center; background: linear-gradient(#f8f5f1, #efebe6); border-bottom: 1px solid #b9b4ae; }
.grip { width: 4px; height: 17px; margin: 0 4px 0 5px; background: radial-gradient(#bbb 0.8px, transparent 1px) 0 0 / 3px 3px; }
.tool { height: 31px; flex: none; display: flex; align-items: center; gap: 4px; padding-left: 3px; border: 1px solid transparent; border-radius: 3px; margin-top: 1px; }
.tool.on { width: 85px; background: #dfdcd9; border-color: #aaa5a0; }
.t2 { width: 119px; padding-left: 5px; margin-left: -1px; }
.t3 { width: 79px; padding-left: 4px; }
.t4 { width: 118px; }
.t5 { width: 90px; }
.t6 { width: 138.5px; }
.t7 { width: 109.5px; }
.t8 { width: 104px; }
.sep { width: 1px; height: 19px; background: #ccc7c1; margin: 0 2px 0 11.5px; }
.mid { height: 868px; flex: none; display: flex; padding-top: 1px; }
.left { width: 342px; flex: none; display: flex; flex-direction: column; }
.ptitle { height: 23px; flex: none; background: #b9b4b0; display: flex; align-items: center; padding-left: 4px; gap: 6px; }
.ptitle .x { margin: -3px 3px 0 auto; width: 17px; height: 17px; background: #f6f4f2; border: 1px solid #8f8a86; border-radius: 3px; display: flex; align-items: center; justify-content: center; }
.tree { height: 727px; flex: none; background: #fff; border: 1px solid #b5b0ab; border-top: 0; display: flex; flex-direction: column; }
.row { height: 19px; flex: none; display: flex; line-height: 19px; }
.row.sel { background: #308cc6; color: #fff; }
.name { width: 171px; flex: none; display: flex; align-items: center; border-right: 1px solid #d6d6d6; }
.row.sel .name { border-color: #5a86ab; }
.rest { width: 171px; flex: 1; border-right: 1px solid #d6d6d6; }
.arw { width: 23px; display: flex; justify-content: center; padding-right: 4px; }
.shut { border: 5px solid transparent; border-left: 6px solid #3c3b37; border-right: 0; }
.open { border: 5px solid transparent; border-top: 6px solid #3c3b37; border-bottom: 0; }
.ic { width: 22px; flex: none; }
.ic svg { margin-top: -1px; }
.disp { color: #2b7bc6; }
.val { display: flex; align-items: center; padding-left: 2px; }
.cb { width: 14px; height: 14px; border: 1px solid #b3aea9; background: #fff; flex: none; }
.val .cb { margin-top: -1px; }
.sw { width: 13px; height: 13px; border: 1px solid #000; margin: 0 4px 0 3px; }
.hgrip { width: 18px; height: 2px; margin: 1px auto; background: radial-gradient(#aaa 0.7px, transparent 1px) 0 0 / 3px 2px; flex: none; }
.desc { height: 78px; flex: none; background: #fff; border: 1px solid #b5b0ab; padding: 4px 0 0 4px; display: flex; flex-direction: column; line-height: 17px; }
.btns { display: flex; gap: 6px; padding: 6px 0 0 2px; }
.btn { width: 80px; height: 25px; border: 1px solid #a9a4a0; border-radius: 3px; background: linear-gradient(#fdfdfc, #eceae7); display: flex; align-items: center; justify-content: center; }
.btn.off { color: #c1bdb9; border-color: #c4c0bc; }
.split { width: 22px; flex: none; display: flex; align-items: center; }
.vgrip { width: 2px; height: 17px; margin-left: 3px; background: radial-gradient(#aaa 0.7px, transparent 1px) 0 0 / 2px 3px; }
.al { border: 4px solid transparent; border-right: 5px solid #333; border-left: 0; margin-left: 6px; }
.rbar { width: 16px; display: flex; align-items: center; background: #dcd8d4; border: 1px solid #b9b4af; border-radius: 3px; }
.rbar .al { margin-left: 4px; }
.bsplit { height: 6px; flex: none; padding-left: 1px; }
.time { height: 22px; }
.time .x { margin-right: 3px; }
.fields { height: 38px; flex: none; display: flex; align-items: center; padding: 2px 17px 0 11px; gap: 6.4px; }
.inp { width: 142px; height: 25px; border: 1px solid #aaa5a0; border-radius: 3px; background: #fff; display: flex; align-items: center; padding-left: 3px; margin-top: -2px; }
.exp { margin: -2px -1px 0 auto; }
.status { flex: 1; display: flex; align-items: center; padding: 1px 0 0 2px; }
.reset { width: 53px; height: 24px; margin: 2px 6px 0 0; flex: none; }
.fps { margin: -6px 1px 0 auto; }
</style>
